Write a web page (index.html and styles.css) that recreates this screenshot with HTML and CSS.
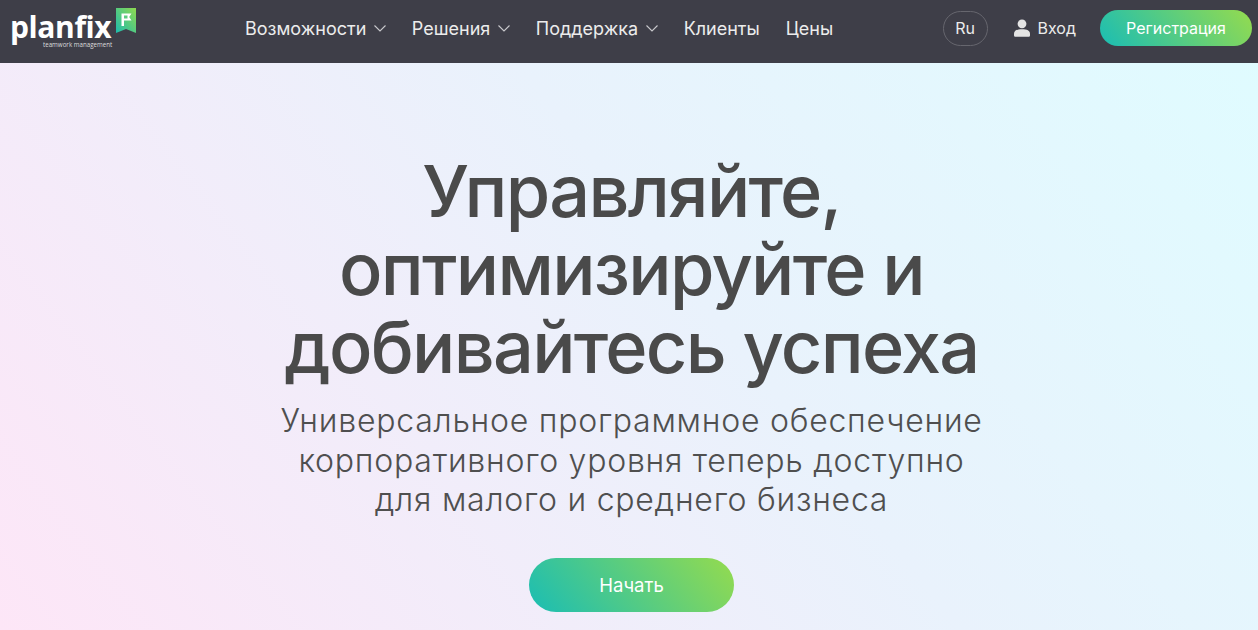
FILE: index.html
```html
<!DOCTYPE html>
<html lang="ru">
<head>
    <meta charset="UTF-8">
    <title>Planfix</title>
    <link rel="stylesheet" href="styles.css">
</head>
<body>
    <header class="topbar">
        <a class="logo" href="#">
            <span class="logo-word">planfix</span>
            <span class="logo-sub">teamwork management</span>
            <svg class="logo-flag" width="20" height="25" viewBox="0 0 20 25">
                <defs>
                    <linearGradient id="flagGrad" x1="1" y1="0" x2="0" y2="1">
                        <stop offset="0" stop-color="#8fd94f"/>
                        <stop offset="1" stop-color="#1dbcae"/>
                    </linearGradient>
                </defs>
                <path d="M0 0H20V25L10 21L0 25Z" fill="url(#flagGrad)"/>
                <path d="M5.5 18V5.5H15.5L13.2 9L15.5 12.5H8V18Z" fill="#fff"/>
                <path d="M8 7.5H11.5V10.5H8Z" fill="#5ccb80"/>
            </svg>
        </a>
        <nav class="menu">
            <a class="menu-item" href="#">Возможности
                <svg class="chevron" width="12" height="7" viewBox="0 0 12 7"><path d="M.5 .5L6 6L11.5 .5" fill="none" stroke="#c9c9cd" stroke-width="1.1"/></svg>
            </a>
            <a class="menu-item" href="#">Решения
                <svg class="chevron" width="12" height="7" viewBox="0 0 12 7"><path d="M.5 .5L6 6L11.5 .5" fill="none" stroke="#c9c9cd" stroke-width="1.1"/></svg>
            </a>
            <a class="menu-item" href="#">Поддержка
                <svg class="chevron" width="12" height="7" viewBox="0 0 12 7"><path d="M.5 .5L6 6L11.5 .5" fill="none" stroke="#c9c9cd" stroke-width="1.1"/></svg>
            </a>
            <a class="menu-item" href="#">Клиенты</a>
            <a class="menu-item" href="#">Цены</a>
        </nav>
        <div class="actions">
            <a class="lang" href="#">Ru</a>
            <a class="login" href="#">
                <svg width="16" height="18" viewBox="0 0 16 18">
                    <circle cx="8" cy="4.8" r="4.4" fill="#e4e4e4"/>
                    <path d="M0 15C0 11.5 3 10.2 8 10.2S16 11.5 16 15V16.2C16 17.2 15.4 17.8 14.4 17.8H1.6C.6 17.8 0 17.2 0 16.2Z" fill="#e4e4e4"/>
                </svg>
                Вход
            </a>
            <a class="btn btn-small" href="#">Регистрация</a>
        </div>
    </header>

    <main class="hero">
        <h1>Управляйте,<br>оптимизируйте и<br>добивайтесь успеха</h1>
        <p class="lead">Универсальное программное обеспечение<br>корпоративного уровня теперь доступно<br>для малого и среднего бизнеса</p>
        <a class="btn btn-big" href="#">Начать</a>
    </main>
</body>
</html>
```

FILE: styles.css
```css
html, body {
    margin: 0;
    height: 100%;
    overflow: hidden;
}
body {
    font-family: 'Inter', 'Noto Sans', sans-serif;
    color: #4a4a4a;
    background: linear-gradient(232deg, #dffcff 0%, #e9f2fc 45%, #fde6f7 100%);
}
a {
    text-decoration: none;
    color: inherit;
}
.topbar {
    box-sizing: border-box;
    height: 63px;
    background-color: #3e3e48;
    display: flex;
    align-items: center;
    padding: 0 6px 7px 10px;
    color: #ececec;
}
.logo {
    position: relative;
    width: 127px;
    height: 46px;
    flex-shrink: 0;
}
.logo-word {
    position: absolute;
    left: 0;
    top: 4px;
    font-family: 'Open Sans', sans-serif;
    font-weight: 700;
    font-size: 30px;
    line-height: 36px;
    letter-spacing: -0.4px;
    color: #fff;
}
.logo-sub {
    position: absolute;
    left: 33px;
    top: 35px;
    font-family: 'Open Sans', sans-serif;
    font-size: 6.2px;
    line-height: 9px;
    white-space: nowrap;
    color: #ddd;
}
.logo-flag {
    position: absolute;
    left: 106px;
    top: 3px;
}
.menu {
    display: flex;
    align-items: center;
    gap: 26px;
    margin-left: 108px;
    font-size: 18px;
}
.menu-item {
    display: flex;
    align-items: center;
    gap: 7.5px;
    white-space: nowrap;
}
.actions {
    display: flex;
    align-items: center;
    margin-left: auto;
    font-size: 16px;
}
.lang {
    box-sizing: border-box;
    width: 45px;
    height: 35px;
    border: 1px solid #66666e;
    border-radius: 18px;
    display: flex;
    align-items: center;
    justify-content: center;
    margin-right: 26px;
}
.login {
    display: flex;
    align-items: center;
    gap: 8px;
    margin-right: 24px;
}
.btn {
    display: flex;
    align-items: center;
    justify-content: center;
    color: #fff;
    background: linear-gradient(50deg, #1abdb4 0%, #95db4e 100%);
}
.btn-small {
    width: 152px;
    height: 36px;
    border-radius: 18px;
}
.hero {
    display: flex;
    flex-direction: column;
    align-items: center;
    text-align: center;
    padding: 89px 0 0 5px;
}
h1 {
    margin: 0;
    font-size: 72px;
    line-height: 78px;
    font-weight: 500;
    letter-spacing: -1.7px;
    color: #4a4a4a;
}
.lead {
    margin: 15px 0 0;
    font-size: 32px;
    line-height: 39.5px;
    font-weight: 300;
    letter-spacing: 0.75px;
    color: #4f4f4f;
}
.btn-big {
    margin-top: 38px;
    width: 205px;
    height: 54px;
    border-radius: 27px;
    font-size: 18.5px;
}
```
